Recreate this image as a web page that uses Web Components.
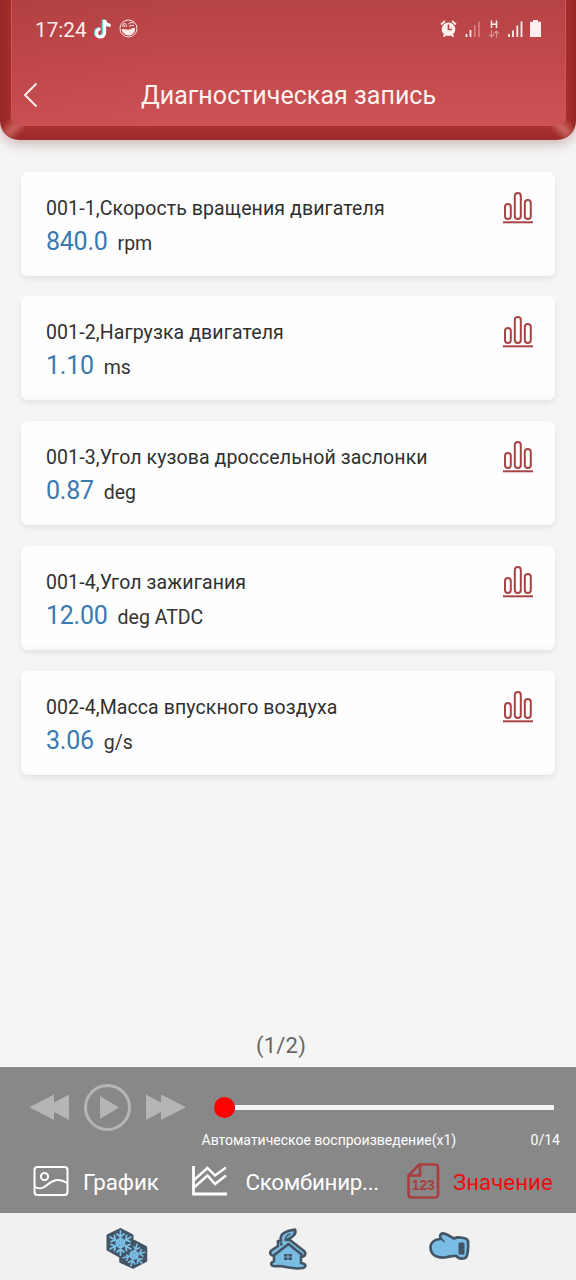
<!DOCTYPE html>
<html lang="ru">
<head>
<meta charset="utf-8">
<title>Диагностическая запись</title>
<style>
html,body{margin:0;padding:0}
body{width:576px;height:1280px;overflow:hidden;background:#f5f5f5;font-family:Roboto,"Liberation Sans",sans-serif}
</style>
</head>
<body>
<diag-app></diag-app>
<script>
function define(name, html, init) {
  const t = document.createElement('template');
  t.innerHTML = html;
  customElements.define(name, class extends HTMLElement {
    connectedCallback() {
      if (this.shadowRoot) return;
      this.attachShadow({mode: 'open'}).append(t.content.cloneNode(true));
      if (init) init.call(this, this.shadowRoot);
    }
  });
}

define('status-bar', `
<style>
:host{display:flex;align-items:center;height:58px;padding:0 33px 0 35px;color:#ffece8;box-sizing:border-box}
.time{font-size:20.700px;line-height:24px;width:59px;white-space:nowrap;margin-top:1px}
svg{display:block;flex:none}
.gap{flex:1}
</style>
<span class="time">17:24</span>
<svg width="18" height="20" viewBox="0 0 18 20" fill="none" stroke-width="3.2"><path d="M10 1V14A4 4 0 1 1 6 10M10 1Q11 6 16 6.5" stroke="#54dce0" transform="translate(-.7 -.4)"/><path d="M10.500 1V14A4 4 0 1 1 6.500 10M10.500 1Q11.500 6 16.500 6.500" stroke="#fff"/></svg>
<svg style="margin-left:7px" width="19" height="20" viewBox="0 0 19 20" fill="none" stroke="#ffece8" stroke-width="1"><circle cx="9.500" cy="9.500" r="8.500"/><path d="M3 10.500Q10 12.500 15.500 9Q16 14.500 11 16Q5 16.500 3 10.500Z" fill="#ffece8"/><path d="M3.500 7.500Q4 4 6 4.500Q8 5 7 8M9.500 5Q12 2 14.500 4M10 7.500Q12 5.500 15 6.500M5 6v2"/></svg>
<span class="gap"></span>
<svg width="103" height="20" viewBox="440 19 103 20" fill="none" stroke="#fff0ee">
<circle cx="448.500" cy="29.300" r="6.800" fill="#fff0ee" stroke="none"/><path d="M441 24.500L445 21M456 24.500L452 21M443.500 36.500L445.500 34.500M453.500 36.500L451.500 34.500" stroke-width="1.800"/><path d="M448.500 24.500V29.500H452" stroke="#b64849" stroke-width="1.700"/>
<path d="M466.500 34V37M470.500 30V37" stroke-width="1.700"/><path d="M474.800 25V37M479 21.500V37" stroke-width="1.500" opacity=".4"/>
<path d="M491.500 20.500V28M496.500 20.500V28M491.500 24.200H496.500" stroke-width="1.500"/>
<path d="M491.500 30V37M489 34.500L491.500 37L494 34.500M496.500 38V31M494 33.500L496.500 31L499 33.500" opacity=".45" stroke-width="1.200"/>
<path d="M509 34V37M513 30.500V37M517.300 25.500V37M521.500 21.500V37" stroke-width="1.800"/>
<path d="M533 20H538V21.800H541V37H530V21.800H533Z" fill="#fff0ee" stroke="none"/>
</svg>`);

define('app-header', `
<style>
:host{display:block;height:140px;padding:0 10px 14px 11px;box-sizing:border-box;border-radius:0 0 19px 19px;position:relative;
background:
linear-gradient(to right,#952724 0,#a62e2c 11px,transparent 11px calc(100% - 10px),#a52e2c calc(100% - 10px),#942522 100%),
linear-gradient(#a52d2c 126px,#a93230 127px,#992b28 140px);
box-shadow:0 3px 14px rgba(110,40,40,.35)}
.glint{position:absolute;bottom:0;width:24px;height:24px;filter:blur(1.500px)}
.l{left:0;border-bottom-left-radius:19px;background:linear-gradient(135deg,transparent 22%,rgba(255,180,170,.38) 54%,transparent 80%)}
.r{right:0;border-bottom-right-radius:19px;background:linear-gradient(225deg,transparent 22%,rgba(255,180,170,.42) 54%,transparent 80%)}
.face{position:relative;height:126px;box-sizing:border-box;border-radius:0 0 9px 9px;background:linear-gradient(92deg,rgba(130,20,20,.06),transparent 30%),linear-gradient(#b54345,#c34a4d 55%,#cc5256);border:solid #cb5759;border-width:0 1px 1px;}
status-bar{margin:0 -11px 0 -12px}
.row{display:flex;align-items:center;justify-content:center;position:relative;height:68px;padding-top:4px;box-sizing:border-box}
.back{position:absolute;left:11px;top:24px}
h1{margin:0;font-weight:400;font-size:25px;line-height:30px;color:#fff3ef;white-space:nowrap;padding-top:4px;letter-spacing:.04px}
</style>
<div class="glint l"></div><div class="glint r"></div>
<div class="face"><status-bar></status-bar>
<div class="row"><svg class="back" width="16" height="26" viewBox="0 0 16 26" fill="none" stroke="#fff0ec" stroke-width="2"><path d="M13.500 1.500L2 13L13.500 24.500"/></svg><h1><slot></slot></h1></div></div>`);

define('value-card', `
<style>
:host{display:flex;justify-content:space-between;height:104px;box-sizing:border-box;padding:24px 21px 0 25px;border-radius:7px;background:linear-gradient(#fefefe 98px,#f9f9f9 104px);box-shadow:0 3px 6px rgba(0,0,0,.08)}
.label{font-size:19.500px;line-height:26px;color:#303030;letter-spacing:.1px;white-space:nowrap}
.val{display:flex;align-items:baseline;gap:10px;line-height:32px;margin-top:4px;white-space:nowrap}
.num{font-size:25px;color:#3a79b0;letter-spacing:-.25px}
.unit{font-size:19.500px;color:#333}
svg{margin-top:-5px;flex:none}
</style>
<div><div class="label"></div><div class="val"><span class="num"></span><span class="unit"></span></div></div>
<svg width="32" height="34" viewBox="0 0 32 34" fill="none" stroke="#a94446" stroke-width="2"><rect x="3" y="13" width="5.800" height="15" rx="2.900"/><rect x="12.800" y="2" width="6" height="26" rx="3"/><rect x="22.800" y="9" width="6" height="19" rx="3"/><path d="M1 31.300H31"/></svg>`,
function (r) {
  r.querySelector('.label').textContent = this.getAttribute('label');
  r.querySelector('.num').textContent = this.getAttribute('value');
  r.querySelector('.unit').textContent = this.getAttribute('unit');
});

define('mode-button', `
<style>
:host{display:flex;align-items:center;color:#fff;font-size:22.300px;line-height:30px;white-space:nowrap}
:host([active]){color:#ee0c0c}
::slotted(svg){display:block;flex:none}
::slotted(span){padding-top:2px}
</style><slot></slot>`);

define('player-bar', `
<style>
:host{display:block;height:146px;background:#888;box-sizing:border-box;overflow:hidden}
.top{display:flex;height:82px;color:#fff}
.top>svg{margin:14px 0 0 28px;flex:none}
.progress{flex:1;padding:30px 16px 0 28px;box-sizing:border-box}
.line{display:flex;align-items:center;height:21px;margin:0 6px 0 -2px}
.dot{width:21px;height:21px;border-radius:50%;background:#f00}
.rail{flex:1;height:4.500px;background:#f3f3f3}
.cap{display:flex;justify-content:space-between;font-size:14px;line-height:18px;margin:13px 0 0 -14.500px;white-space:nowrap}
.modes{display:flex;height:64px;align-items:center}
mode-button{height:36px}
</style>
<div class="top">
<svg width="160" height="54" viewBox="28 1081 160 54" fill="#b5b5b5"><path d="M29.500 1107.300L54 1094.500V1102.400L69 1094.500V1120L54 1112.100V1120ZM146 1094.500L161 1102.400V1094.500L186 1107.300L161 1120V1112.100L146 1120Z"/><circle cx="107.500" cy="1107.500" r="22" fill="none" stroke="#b5b5b5" stroke-width="3"/><path d="M100 1096L119 1107.500L100 1119Z"/></svg>
<div class="progress"><div class="line"><span class="dot"></span><span class="rail"></span></div>
<div class="cap"><span>Автоматическое воспроизведение(x1)</span><span>0/14</span></div></div>
</div>
<div class="modes">
<mode-button style="width:158px;margin-left:33px"><svg style="margin-right:14px" width="36" height="32" viewBox="0 0 36 32" fill="none" stroke="#fff" stroke-width="2"><rect x="1.500" y="2" width="33" height="28" rx="3"/><circle cx="11.500" cy="11.500" r="3.600"/><path d="M1.500 21.500C5 24 10 24 14 20C19 16 25 12 34 18"/></svg><span>График</span></mode-button>
<mode-button style="width:216px"><svg style="margin-right:17.500px" width="37" height="32" viewBox="0 0 37 32" fill="none" stroke="#fff" stroke-width="2.800"><path d="M2.500 1V29H36"/><path stroke-width="2.400" d="M3 15L16.500 3L24 10.500L35 2.500M3 22.500L16.500 10.500L24 19L35 10.500"/></svg><span style="letter-spacing:-.25px">Скомбинир...</span></mode-button>
<mode-button active><svg style="margin-right:13px" width="33" height="38" viewBox="0 0 33 38" fill="none" stroke="#a93e40" stroke-width="2.600"><path d="M12 2.500H28Q31 2.500 31 5.500V32Q31 35.500 28 35.500H4.500Q1.500 35.500 1.500 32V13.500ZM13 2.500V13.500H2"/><text x="16.300" y="28" text-anchor="middle" fill="#a93e40" stroke="none" font-family="Liberation Sans,Arial,sans-serif" font-weight="700" font-size="14" textLength="23">123</text></svg><span>Значение</span></mode-button>
</div>`);

define('snow-nav', `
<style>
:host{display:block;height:67px;background:#f1f1f1}
svg{display:block}
</style>
<svg width="576" height="67" viewBox="0 1213 576 67" stroke-linejoin="round" stroke-linecap="round">
<defs><g id="flake" fill="none" stroke="#7cc0e8" stroke-width="1.800"><g id="arm"><path d="M0 0V-12M0 -6L-3.500 -9M0 -6L3.500 -9M0 -2.500L-1.500 -4M0 -2.500L1.500 -4"/></g><use href="#arm" transform="rotate(60)"/><use href="#arm" transform="rotate(120)"/><use href="#arm" transform="rotate(180)"/><use href="#arm" transform="rotate(240)"/><use href="#arm" transform="rotate(300)"/></g></defs>
<path d="M134 1241.500L145.500 1247.500V1260.500L133 1267L121 1261.500V1247.500Z" fill="#435565" stroke="#435565" stroke-width="3.500"/>
<use href="#flake" transform="translate(134 1255) rotate(16) scale(.93)"/>
<path d="M120.500 1229.500L132 1235.500V1249L120.500 1256.500L108 1249.500V1235.500Z" fill="#435565" stroke="#435565" stroke-width="3"/>
<use href="#flake" transform="translate(120.500 1243)"/>
<g stroke="#435565" stroke-width="2.600" fill="#7abde4">
<path d="M278 1246V1241H281C279 1234 285 1231 295 1229.500C297 1234 292 1238 286 1240H290L304 1251C307 1254 304 1257.500 301 1256.500V1263C307 1264 306 1267 303 1268C292 1270 287 1266 277 1266C270 1267 270 1263 274 1261V1255.500C270 1256 269 1252 272 1250Z"/>
<path d="M275 1254.500L288.500 1244L301.500 1254.500" fill="none" stroke-width="2.800"/><path d="M285 1240Q286 1235 290 1234" fill="none" stroke-width="1.300"/>
</g><rect x="280" y="1242.500" width="2.500" height="3" fill="#435565"/><path d="M284 1254H292V1260H284Z" fill="#435565"/><path d="M288 1254V1260M284 1257H292" stroke="#7abde4" stroke-width=".8"/>
<path d="M454 1238.500C448 1235 445 1233 442 1233.500C439 1235 440 1237 441 1239C434 1239 430.500 1243 430.500 1248C431 1256 438 1258 444 1257.500C450 1257 453 1255 456.500 1256C459 1259.500 462 1259 465 1258C468 1257 468.500 1247 468 1241C467 1237.500 463 1238 460 1237.500Q457 1237 454 1238.500Z" fill="#7abde4" stroke="#435565" stroke-width="2.700"/>
<path d="M441 1238.500L444 1241.500" fill="none" stroke="#435565" stroke-width="1.600"/><rect x="458.500" y="1242.500" width="6" height="12" rx="1.200" fill="#435565"/>
</svg>`);

define('diag-app', `
<style>
:host{display:flex;flex-direction:column;width:576px;height:1280px;background:#f5f5f5}
.list{flex:1;display:flex;flex-direction:column;gap:20.800px;padding:31.500px 21px 0}
.pager{height:42px;line-height:42px;text-align:center;font-size:22px;color:#666;padding-right:14px;letter-spacing:.25px}
</style>
<app-header>Диагностическая запись</app-header>
<div class="list">
<value-card label="001-1,Скорость вращения двигателя" value="840.0" unit="rpm"></value-card>
<value-card label="001-2,Нагрузка двигателя" value="1.10" unit="ms"></value-card>
<value-card label="001-3,Угол кузова дроссельной заслонки" value="0.87" unit="deg"></value-card>
<value-card label="001-4,Угол зажигания" value="12.00" unit="deg ATDC"></value-card>
<value-card label="002-4,Масса впускного воздуха" value="3.06" unit="g/s"></value-card>
</div>
<div class="pager">(1/2)</div>
<player-bar></player-bar>
<snow-nav></snow-nav>`);
</script>
</body>
</html>
